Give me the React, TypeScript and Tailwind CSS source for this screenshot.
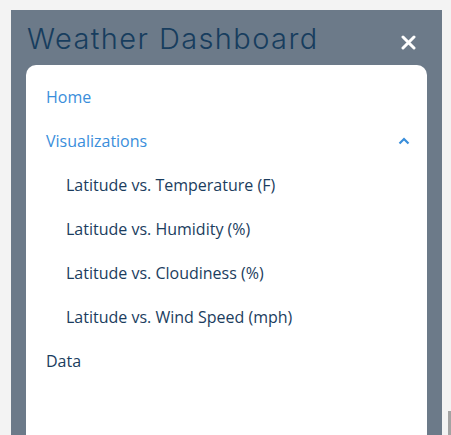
import React from "react";

const subItems = [
  "Latitude vs. Temperature (F)",
  "Latitude vs. Humidity (%)",
  "Latitude vs. Cloudiness (%)",
  "Latitude vs. Wind Speed (mph)",
];

export default function App() {
  return (
    <div className="flex h-[435px] w-[451px] overflow-hidden bg-[#f3f3f3]">
      <div className="ml-[11px] mt-[10px] flex w-[431px] flex-col bg-[#6c7a89] px-[15px]">
        <div className="flex h-[55px] items-start justify-between">
          <h1
            className="ml-[1px] mt-[12px] text-[29px] font-light leading-[34px] tracking-[1.4px] text-[#173d5e]"
            style={{ fontFamily: "Inter, 'Open Sans', sans-serif" }}
          >
            Weather Dashboard
          </h1>
          <button className="mr-[11px] mt-[24px] flex h-[16px] w-[16px] items-center justify-center">
            <svg width="15" height="15" viewBox="0 0 15 15">
              <path d="M2 2 L13 13 M13 2 L2 13" stroke="#ffffff" strokeWidth="3" strokeLinecap="round" />
            </svg>
          </button>
        </div>
        <nav
          className="flex flex-1 flex-col rounded-t-[10px] bg-white pt-[10px] text-[16px]"
          style={{ fontFamily: "'Open Sans', sans-serif" }}
        >
          <a className="flex h-[44px] items-center pl-[20px] text-[#3a8edb]">Home</a>
          <div className="flex h-[44px] items-center justify-between pl-[20px] pr-[17px] text-[#3a8edb]">
            <span>Visualizations</span>
            <svg width="12" height="8" viewBox="0 0 12 8">
              <path d="M1.5 6.5 L6 2 L10.5 6.5" fill="none" stroke="#3a8edb" strokeWidth="2.2" />
            </svg>
          </div>
          {subItems.map((s) => (
            <a key={s} className="flex h-[44px] items-center pl-[40px] text-[#1b3d5e]">
              {s}
            </a>
          ))}
          <a className="flex h-[44px] items-center pl-[20px] text-[#1b3d5e]">Data</a>
        </nav>
      </div>
      <div className="flex w-[9px] flex-col justify-end">
        <div className="ml-[6px] h-[24px] w-[3px] bg-[#a3a3a3]" />
      </div>
    </div>
  );
}
